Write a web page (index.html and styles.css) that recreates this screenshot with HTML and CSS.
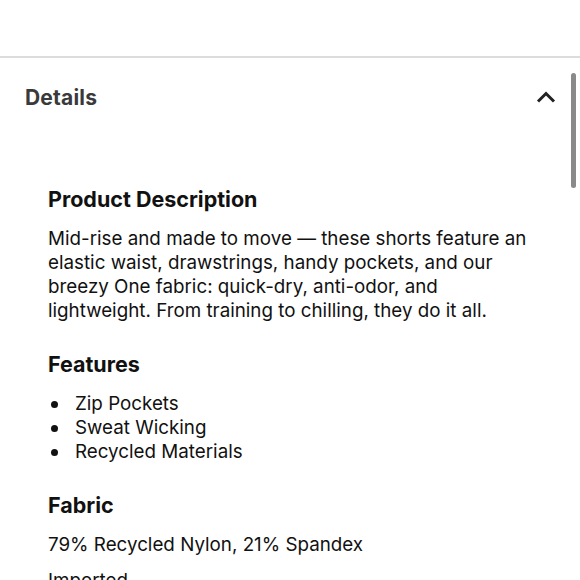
FILE: index.html
```html
<!DOCTYPE html>
<html>
<head>
<meta charset="utf-8">
<link rel="stylesheet" href="styles.css">
</head>
<body>
<div class="page">
  <div class="top-space"></div>
  <section class="accordion">
    <div class="acc-header">
      <h2 class="acc-title">Details</h2>
      <svg class="chevron" width="20" height="14" viewBox="0 0 20 14"><path d="M2 11.5 L10 3.5 L18 11.5" fill="none" stroke="#222" stroke-width="3"/></svg>
    </div>
    <div class="acc-body">
      <h3 class="sec-title">Product Description</h3>
      <p class="sec-text">Mid-rise and made to move — these shorts feature an elastic waist, drawstrings, handy pockets, and our breezy One fabric: quick-dry, anti-odor, and lightweight. From training to chilling, they do it all.</p>
      <h3 class="sec-title">Features</h3>
      <ul class="features">
        <li>Zip Pockets</li>
        <li>Sweat Wicking</li>
        <li>Recycled Materials</li>
      </ul>
      <h3 class="sec-title">Fabric</h3>
      <p class="sec-text tight">79% Recycled Nylon, 21% Spandex</p>
      <p class="sec-text">Imported</p>
    </div>
  </section>
  <div class="scrollbar"></div>
</div>
</body>
</html>
```

FILE: styles.css
```css
html, body {
  margin: 0;
  padding: 0;
  background: #fff;
  overflow: hidden;
}
.page {
  position: relative;
  width: 580px;
  height: 580px;
  overflow: hidden;
  font-family: Inter, "Noto Sans", sans-serif;
  color: #111;
}
.top-space {
  height: 56px;
}
.accordion {
  border-top: 2px solid #dcdcdc;
}
.acc-header {
  display: flex;
  align-items: center;
  justify-content: space-between;
  padding: 24px 24px 0 25px;
  height: 30px;
}
.acc-title {
  margin: 0;
  font-size: 21px;
  font-weight: 700;
  color: #3a3a3a;
  letter-spacing: 0.2px;
}
.chevron {
  display: block;
}
.acc-body {
  padding: 73px 42px 0 48px;
}
.sec-title {
  margin: 0 0 14px;
  font-size: 21.5px;
  line-height: 28px;
  font-weight: 700;
  color: #111;
}
.sec-text {
  margin: 0 0 27px;
  font-size: 18.8px;
  line-height: 24px;
  font-weight: 400;
}
.sec-text.tight {
  margin-bottom: 12px;
}
.features {
  list-style: none;
  margin: 0 0 27px;
  padding: 0;
  font-size: 18.8px;
  line-height: 24px;
}
.features li {
  display: flex;
  align-items: center;
}
.features li::before {
  content: "";
  width: 7px;
  height: 7px;
  border-radius: 50%;
  background: #111;
  margin: 0 17px 0 3px;
  flex: none;
}
.scrollbar {
  position: absolute;
  right: 4px;
  top: 73px;
  width: 5px;
  height: 115px;
  border-radius: 3px;
  background: #8a8a8a;
}
```
